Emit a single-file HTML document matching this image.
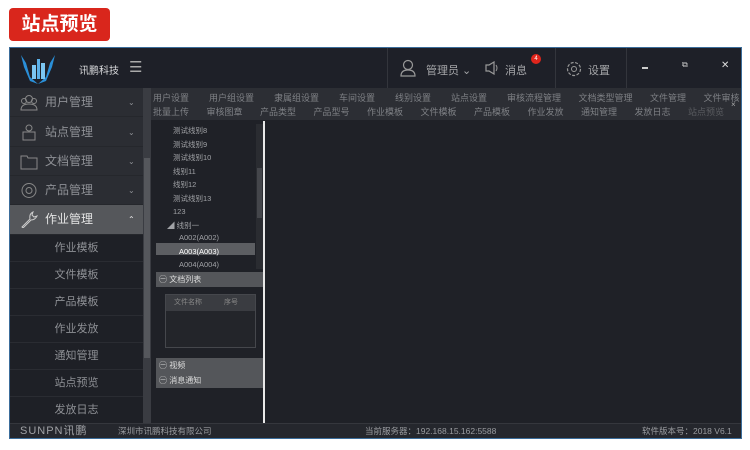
<!DOCTYPE html>
<html><head><meta charset="utf-8"><style>
*{margin:0;padding:0;box-sizing:border-box}
body{width:750px;height:450px;background:#fff;font-family:"Liberation Sans","Noto Sans CJK SC",sans-serif;position:relative;overflow:hidden}
.abs{position:absolute}
.title{left:9px;top:8px;width:101px;height:33px;background:#d9261c;border-radius:4px;color:#fff;font-size:19px;font-weight:bold;line-height:33px;text-align:center}
.win{left:9px;top:47px;width:733px;height:392px;background:#1f2127;border:1px solid #3b6d9b}
.hdr{left:0;top:0;width:731px;height:40px;background:#1e2028}
.side{left:0;top:40px;width:133px;height:335px;background:#2b2d33}
.mi{position:absolute;left:0;width:133px;height:29px;color:#8e9095;font-size:12px;line-height:29px;border-bottom:1px solid #25272c}
.mi .ic{position:absolute;left:10px;top:6px;width:18px;height:17px}
.mi .t{position:absolute;left:35px}
.mi .ar{position:absolute;left:118px;font-size:8px}
.sub{position:absolute;left:0;width:133px;height:27px;background:#1e2026;color:#8e9095;font-size:11px;line-height:27px;text-align:center;border-bottom:1px solid #2a2c32}
.tabs{font-size:9px;color:#7e8085;white-space:nowrap}
.tree{font-size:7.5px;color:#a0a2a6}
</style></head><body>
<div class="abs title">站点预览</div>
<div class="abs win">
 <div class="abs hdr">
  <svg class="abs" style="left:8px;top:5px" width="40" height="32" viewBox="0 0 40 32">
   <path d="M3 2 L8 10 L12 24 L20 31 L28 24 L32 10 L37 2 L34 14 L28 28 L20 31 L12 28 L6 14Z" fill="#2a8fd8"/>
   <rect x="14" y="12" width="4" height="14" fill="#7cc6f2"/><rect x="19" y="6" width="3" height="20" fill="#5bb0e8"/><rect x="23" y="10" width="4" height="16" fill="#7cc6f2"/>
  </svg>
  <div class="abs" style="left:69px;top:14px;font-size:10px;color:#d8d9db">讯鹏科技</div>
  <div class="abs" style="left:119px;top:10px;font-size:15px;color:#aaa">☰</div>
  <div class="abs" style="left:377px;top:0;width:1px;height:40px;background:#33353c"></div>
  <svg class="abs" style="left:390px;top:11px" width="16" height="18" viewBox="0 0 16 18"><circle cx="8" cy="6" r="4.5" fill="none" stroke="#999" stroke-width="1.2"/><path d="M1 17 Q1 11 8 11 Q15 11 15 17Z" fill="none" stroke="#999" stroke-width="1.2"/></svg>
  <div class="abs" style="left:416px;top:14px;font-size:11px;color:#a5a6a9">管理员 ⌄</div>
  <svg class="abs" style="left:474px;top:13px" width="16" height="14" viewBox="0 0 16 14"><path d="M2 4 H5 L10 1 V13 L5 10 H2Z" fill="none" stroke="#999" stroke-width="1.2"/><path d="M12 4 Q14 7 12 10" fill="none" stroke="#999"/></svg>
  <div class="abs" style="left:495px;top:14px;font-size:11px;color:#a5a6a9">消息</div>
  <div class="abs" style="left:521px;top:6px;width:10px;height:10px;border-radius:5px;background:#e0251c;color:#fff;font-size:6px;text-align:center;line-height:10px">4</div>
  <div class="abs" style="left:545px;top:0;width:1px;height:40px;background:#33353c"></div>
  <svg class="abs" style="left:556px;top:13px" width="16" height="16" viewBox="0 0 16 16"><circle cx="8" cy="8" r="6.5" fill="none" stroke="#999" stroke-width="1.2" stroke-dasharray="3 1.5"/><circle cx="8" cy="8" r="2.5" fill="none" stroke="#999"/></svg>
  <div class="abs" style="left:578px;top:14px;font-size:11px;color:#a5a6a9">设置</div>
  <div class="abs" style="left:616px;top:0;width:1px;height:40px;background:#33353c"></div>
  <div class="abs" style="left:632px;top:19px;width:6px;height:2px;background:#ccc"></div>
  <div class="abs" style="left:672px;top:12px;font-size:8px;color:#ccc">⧉</div>
  <div class="abs" style="left:711px;top:12px;font-size:10px;color:#ddd">✕</div>
 </div>
 <div class="abs side">
  <div class="mi" style="top:0"><svg class="ic" viewBox="0 0 18 17"><circle cx="9" cy="5" r="3.5" fill="none" stroke="#888"/><circle cx="4" cy="7" r="2.5" fill="none" stroke="#888"/><circle cx="14" cy="7" r="2.5" fill="none" stroke="#888"/><path d="M1 16 Q1 10 9 10 Q17 10 17 16Z" fill="none" stroke="#888"/></svg><span class="t">用户管理</span><span class="ar">⌄</span></div>
  <div class="mi" style="top:30px"><svg class="ic" viewBox="0 0 18 17"><circle cx="9" cy="4" r="3" fill="none" stroke="#888"/><rect x="3" y="8" width="12" height="8" fill="none" stroke="#888"/></svg><span class="t">站点管理</span><span class="ar">⌄</span></div>
  <div class="mi" style="top:59px"><svg class="ic" viewBox="0 0 18 17"><path d="M1 3 H7 L8 5 H17 V16 H1Z" fill="none" stroke="#888"/></svg><span class="t">文档管理</span><span class="ar">⌄</span></div>
  <div class="mi" style="top:88px"><svg class="ic" viewBox="0 0 18 17"><circle cx="9" cy="8.5" r="7" fill="none" stroke="#888"/><circle cx="9" cy="8.5" r="3" fill="none" stroke="#888"/></svg><span class="t">产品管理</span><span class="ar">⌄</span></div>
  <div class="mi" style="top:117px;background:#55575b;color:#e4e4e4;height:30px"><svg class="ic" viewBox="0 0 18 17"><path d="M2 16 L10 8 Q9 3 13 1 L12 4 L14 6 L17 5 Q15 9 11 9 L3 17Z" fill="none" stroke="#ccc"/></svg><span class="t">作业管理</span><span class="ar">⌃</span></div>
  <div class="sub" style="top:147px">作业模板</div>
  <div class="sub" style="top:174px">文件模板</div>
  <div class="sub" style="top:201px">产品模板</div>
  <div class="sub" style="top:228px">作业发放</div>
  <div class="sub" style="top:255px">通知管理</div>
  <div class="sub" style="top:282px">站点预览</div>
  <div class="sub" style="top:309px">发放日志</div>
 </div>
 <div class="abs" style="left:133px;top:40px;width:8px;height:335px;background:#3a3c42"></div>
 <div class="abs" style="left:134px;top:110px;width:6px;height:200px;background:#55575c"></div>
 <div class="abs" style="left:141px;top:40px;width:590px;height:32px;background:#2c2e34"></div>
 <div class="abs tabs" style="left:143px;top:43px;word-spacing:0">用户设置&nbsp;&nbsp;&nbsp;&nbsp;&nbsp;&nbsp;&nbsp;&nbsp;用户组设置&nbsp;&nbsp;&nbsp;&nbsp;&nbsp;&nbsp;&nbsp;&nbsp;隶属组设置&nbsp;&nbsp;&nbsp;&nbsp;&nbsp;&nbsp;&nbsp;&nbsp;车间设置&nbsp;&nbsp;&nbsp;&nbsp;&nbsp;&nbsp;&nbsp;&nbsp;线别设置&nbsp;&nbsp;&nbsp;&nbsp;&nbsp;&nbsp;&nbsp;&nbsp;站点设置&nbsp;&nbsp;&nbsp;&nbsp;&nbsp;&nbsp;&nbsp;&nbsp;审核流程管理&nbsp;&nbsp;&nbsp;&nbsp;&nbsp;&nbsp;&nbsp;文档类型管理&nbsp;&nbsp;&nbsp;&nbsp;&nbsp;&nbsp;&nbsp;文件管理&nbsp;&nbsp;&nbsp;&nbsp;&nbsp;&nbsp;&nbsp;文件审核</div>
 <div class="abs tabs" style="left:143px;top:57px">批量上传&nbsp;&nbsp;&nbsp;&nbsp;&nbsp;&nbsp;&nbsp;审核图章&nbsp;&nbsp;&nbsp;&nbsp;&nbsp;&nbsp;&nbsp;产品类型&nbsp;&nbsp;&nbsp;&nbsp;&nbsp;&nbsp;&nbsp;产品型号&nbsp;&nbsp;&nbsp;&nbsp;&nbsp;&nbsp;&nbsp;作业模板&nbsp;&nbsp;&nbsp;&nbsp;&nbsp;&nbsp;&nbsp;文件模板&nbsp;&nbsp;&nbsp;&nbsp;&nbsp;&nbsp;&nbsp;产品模板&nbsp;&nbsp;&nbsp;&nbsp;&nbsp;&nbsp;&nbsp;作业发放&nbsp;&nbsp;&nbsp;&nbsp;&nbsp;&nbsp;&nbsp;通知管理&nbsp;&nbsp;&nbsp;&nbsp;&nbsp;&nbsp;&nbsp;发放日志&nbsp;&nbsp;&nbsp;&nbsp;&nbsp;&nbsp;&nbsp;<span style="color:#5a5c60">站点预览</span></div>
 <div class="abs" style="left:721px;top:52px;font-size:8px;color:#aaa">×</div>
 <div class="abs tree" style="left:163px;top:76px;line-height:13.5px">测试线别8<br>测试线别9<br>测试线别10<br>线别11<br>线别12<br>测试线别13<br>123<br><span style="margin-left:-6px">◢ </span>线别一</div>
 <div class="abs" style="left:146px;top:195px;width:99px;height:12px;background:#5c5e62"></div>
 <div class="abs tree" style="left:169px;top:183px;line-height:13.5px">A002(A002)<br><span style="color:#fff">A003(A003)</span><br>A004(A004)</div>
 <div class="abs" style="left:246px;top:76px;width:7px;height:145px;background:#2a2c31"></div>
 <div class="abs" style="left:247px;top:120px;width:5px;height:50px;background:#44464b"></div>
 <div class="abs" style="left:253px;top:73px;width:2px;height:302px;background:#e8e8e8"></div>
 <div class="abs" style="left:146px;top:224px;width:107px;height:15px;background:#54565a;color:#ddd;font-size:8px;line-height:15px;padding-left:3px">㊀ 文档列表</div>
 <div class="abs" style="left:155px;top:246px;width:91px;height:54px;border:1px solid #45474c;background:#23252a"></div>
 <div class="abs" style="left:156px;top:247px;width:89px;height:16px;background:#3a3c41;color:#888;font-size:7px;line-height:16px"><span style="margin-left:8px">文件名称</span><span style="margin-left:22px">序号</span></div>
 <div class="abs" style="left:146px;top:310px;width:107px;height:30px;background:#54565a;color:#ddd;font-size:8px;line-height:15px;padding-left:3px">㊀ 视频<br>㊀ 消息通知</div>
 <div class="abs" style="left:0;top:375px;width:731px;height:15px;background:#25272d;border-top:1px solid #35373d;font-size:8.5px;color:#9a9ca0;line-height:14px">
  <span class="abs" style="left:10px;font-size:11px;color:#a0a2a6;letter-spacing:1px">SUNPN讯鹏</span>
  <span class="abs" style="left:108px">深圳市讯鹏科技有限公司</span>
  <span class="abs" style="left:355px">当前服务器：192.168.15.162:5588</span>
  <span class="abs" style="left:632px">软件版本号：2018 V6.1</span>
 </div>
</div>
</body></html>
